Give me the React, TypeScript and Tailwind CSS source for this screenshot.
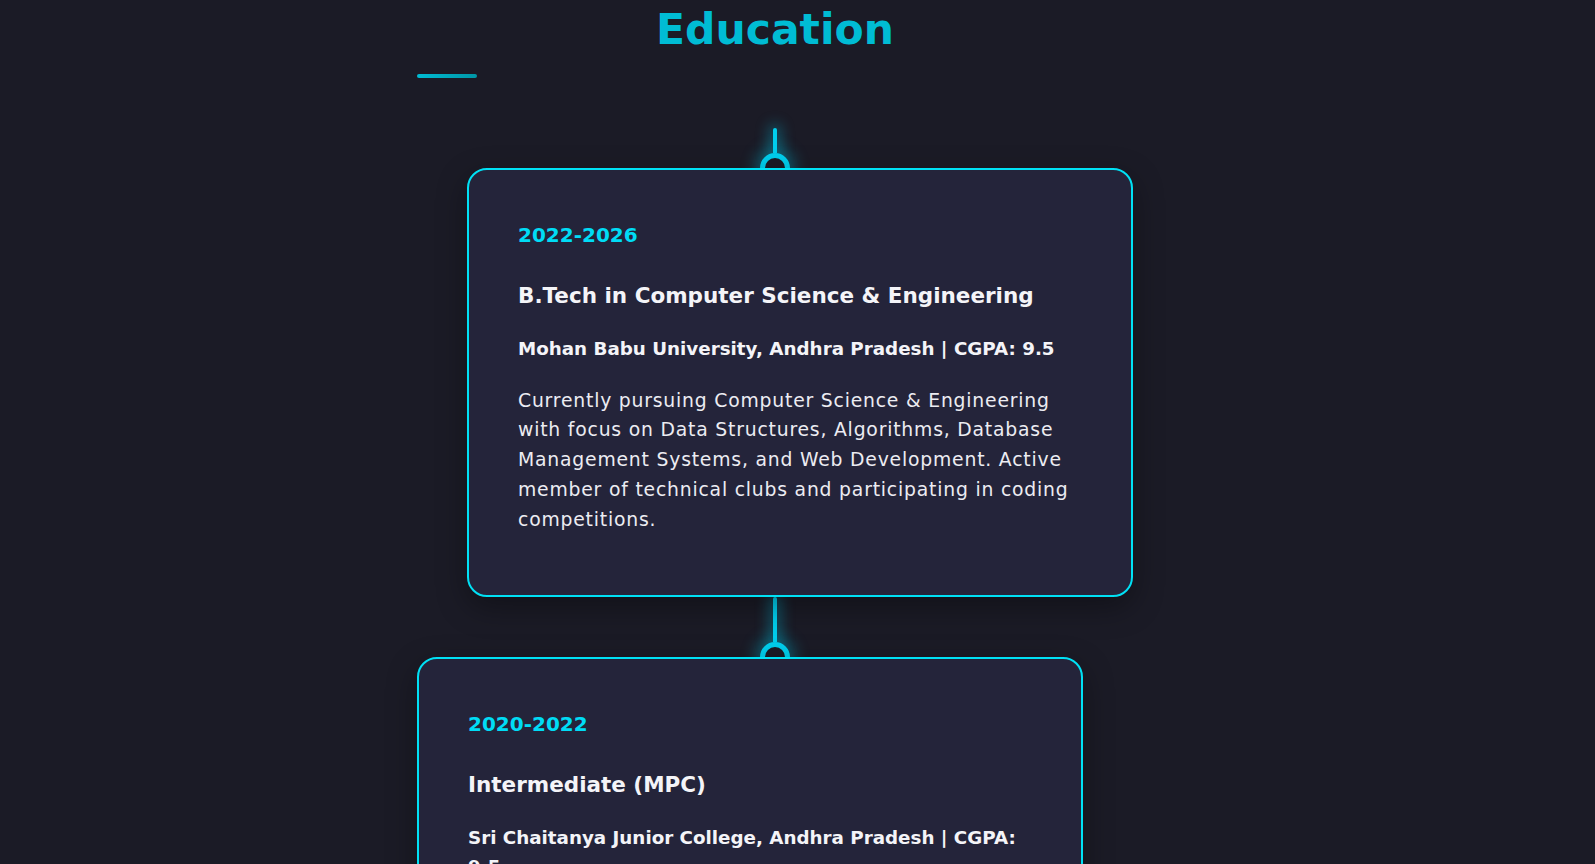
/* Education timeline section */

type Education = {
  years: string;
  degree: string;
  school: string[];
  details: string[];
  align: "start" | "end";
  lineHeight: string;
};

const EDUCATION: Education[] = [
  {
    years: "2022-2026",
    degree: "B.Tech in Computer Science & Engineering",
    school: ["Mohan Babu University, Andhra Pradesh | CGPA: 9.5"],
    details: [
      "Currently pursuing Computer Science & Engineering",
      "with focus on Data Structures, Algorithms, Database",
      "Management Systems, and Web Development. Active",
      "member of technical clubs and participating in coding",
      "competitions.",
    ],
    align: "end",
    lineHeight: "h-[25px]",
  },
  {
    years: "2020-2022",
    degree: "Intermediate (MPC)",
    school: ["Sri Chaitanya Junior College, Andhra Pradesh | CGPA:", "9.5"],
    details: [
      "Completed Intermediate education with Mathematics,",
      "Physics and Chemistry, building a strong foundation",
      "in analytical thinking and problem solving.",
    ],
    align: "start",
    lineHeight: "h-[45px]",
  },
];

function Connector({ lineHeight }: { lineHeight: string }) {
  return (
    <div className="flex flex-col items-center">
      <div className={`${lineHeight} w-[4px] rounded-t-full bg-[#00cfee] shadow-[0_0_14px_4px_rgba(0,207,238,0.35)]`} />
      <div className="-mb-[15px] h-[30px] w-[30px] rounded-full border-[5px] border-[#00cfee] bg-[#1b1b26] shadow-[0_0_16px_4px_rgba(0,207,238,0.4)]" />
    </div>
  );
}

function EducationCard({ item }: { item: Education }) {
  return (
    <div
      className={`relative z-10 w-[666px] rounded-[20px] border-2 border-[#00e1f5] bg-[#24243a] pt-[48px] pb-[60px] pl-[49px] pr-[48px] shadow-[0_10px_30px_rgba(0,0,0,0.35)] ${
        item.align === "end" ? "self-end" : "self-start"
      }`}
    >
      <div className="mb-[22px] text-[20px] font-bold leading-[35px] text-[#00dcf5]">{item.years}</div>
      <h3 className="mb-[19px] text-[21.5px] font-bold leading-[41px] text-[#f4f4f8]">{item.degree}</h3>
      <h4 className="mb-[22px] text-[18.3px] font-bold leading-[28.5px] text-[#f4f4f8]">
        {item.school.map((line, i) => (
          <div key={i} className="whitespace-nowrap">
            {line}
          </div>
        ))}
      </h4>
      <p className="text-[18.8px] leading-[29.9px] tracking-[0.8px] text-[#ececf2]">
        {item.details.map((line, i) => (
          <span key={i} className="block whitespace-nowrap">
            {line}
          </span>
        ))}
      </p>
    </div>
  );
}

export default function App() {
  return (
    <div className="min-h-screen bg-[#1b1b26] pl-[417px] pt-[9px] font-['DejaVu_Sans',sans-serif]">
      <section className="flex w-[716px] flex-col items-center pb-24">
        <h2 className="text-center text-[42.5px] font-bold leading-none text-[#00bcd4]">Education</h2>
        <div className="mt-[22.5px] h-[4px] w-[60px] self-start rounded-full bg-gradient-to-r from-[#00bcd4] to-[#0097a7]" />

        <div className="mt-[50px] flex w-full flex-col items-center">
          {EDUCATION.map((item) => (
            <div key={item.years} className="flex w-full flex-col items-center">
              <Connector lineHeight={item.lineHeight} />
              <EducationCard item={item} />
            </div>
          ))}
        </div>
      </section>
    </div>
  );
}
